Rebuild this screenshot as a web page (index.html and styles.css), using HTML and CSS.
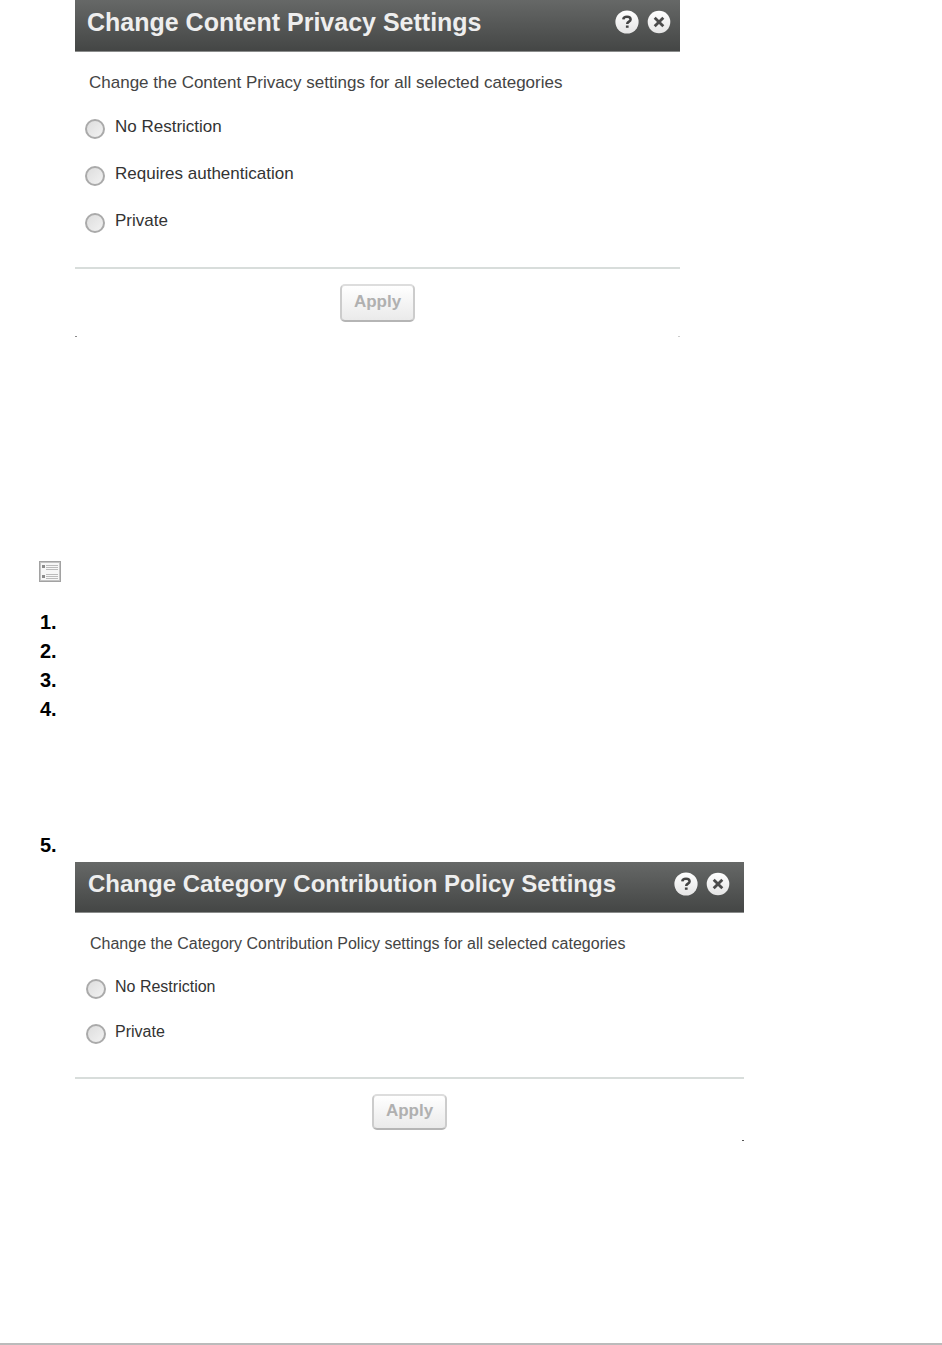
FILE: index.html
```html
<!DOCTYPE html>
<html lang="en">
<head>
<meta charset="utf-8">
<meta name="viewport" content="width=device-width, initial-scale=1">
<title>Category Settings</title>
<link rel="stylesheet" href="styles.css">
</head>
<body>

<!-- shared header icons -->
<svg class="sprite" aria-hidden="true">
  <linearGradient id="shine" x1="0" y1="0" x2="0" y2="1">
    <stop offset="0" stop-color="#fff"/>
    <stop offset="1" stop-color="#e4e4e4"/>
  </linearGradient>
  <symbol id="help" viewBox="0 0 24 24">
    <circle cx="12" cy="12" r="11.6" fill="url(#shine)"/>
    <path d="M8.3 9.4C8.5 7.4 9.900 6.800 12 6.800c2.300 0 3.600 1 3.600 2.600 0 2.200-3.400 2.200-3.400 4.500" fill="none" stroke="#444" stroke-width="2.500"/>
    <path d="M10.900 15.500h2.700v2.300h-2.700z" fill="#444"/>
  </symbol>
  <symbol id="close" viewBox="0 0 24 24">
    <circle cx="12" cy="12" r="11.3" fill="url(#shine)"/>
    <path d="M7.700 7.700l8.600 8.600M16.300 7.700l-8.600 8.600" fill="none" stroke="#4a4a4a" stroke-width="2.800"/>
  </symbol>
</svg>

<main class="page">
  <section class="dialog">
    <header class="dialog-header">
      <h2>Change Content Privacy Settings</h2>
      <button type="button" class="icon-btn" aria-label="Help"><svg><use href="#help"/></svg></button>
      <button type="button" class="icon-btn" aria-label="Close"><svg><use href="#close"/></svg></button>
    </header>
    <form class="dialog-body">
      <p>Change the Content Privacy settings for all selected categories</p>
      <div class="option">
        <input type="radio" name="privacy" id="privacy-none">
        <label for="privacy-none">No Restriction</label>
      </div>
      <div class="option">
        <input type="radio" name="privacy" id="privacy-auth">
        <label for="privacy-auth">Requires authentication</label>
      </div>
      <div class="option">
        <input type="radio" name="privacy" id="privacy-private">
        <label for="privacy-private">Private</label>
      </div>
    </form>
    <footer class="dialog-footer left-dot right-dot">
      <button type="button" class="apply" disabled>Apply</button>
    </footer>
  </section>

  <svg class="task-icon" viewBox="0 0 22 21" aria-hidden="true">
    <rect width="22" height="21" fill="#a2a2a2"/>
    <path d="M1 1h20v19H1z" fill="#c4c4c4"/>
    <path d="M2 2h18v17H2z" fill="#f7f7f7"/>
    <path d="M3 4h3v3H3zM3 14h3v3H3z" fill="#8c8c8c"/>
    <path d="M7 4.500h12M7 6.500h12M7 8.500h12M7 13.500h12M7 15.500h12M7 17.500h12" stroke="#bbb"/>
  </svg>

  <ol class="steps">
    <li><span>1.</span></li>
    <li><span>2.</span></li>
    <li><span>3.</span></li>
    <li class="long"><span>4.</span></li>
    <li><span>5.</span></li>
  </ol>

  <section class="dialog wide">
    <header class="dialog-header">
      <h2>Change Category Contribution Policy Settings</h2>
      <button type="button" class="icon-btn" aria-label="Help"><svg><use href="#help"/></svg></button>
      <button type="button" class="icon-btn" aria-label="Close"><svg><use href="#close"/></svg></button>
    </header>
    <form class="dialog-body">
      <p>Change the Category Contribution Policy settings for all selected categories</p>
      <div class="option">
        <input type="radio" name="policy" id="policy-none">
        <label for="policy-none">No Restriction</label>
      </div>
      <div class="option">
        <input type="radio" name="policy" id="policy-private">
        <label for="policy-private">Private</label>
      </div>
    </form>
    <footer class="dialog-footer right-dot dark">
      <button type="button" class="apply" disabled>Apply</button>
    </footer>
  </section>
</main>

</body>
</html>
```
FILE: styles.css
```css
* {
  box-sizing: border-box;
}

body {
  margin: 0;
  background: #fff;
  color: #333;
  font-family: "Liberation Sans", Arial, Helvetica, sans-serif;
  font-size: 16px;
}

.sprite {
  display: block;
  width: 0;
  height: 0;
}

.page {
  min-height: 100vh;
  padding: 0 39px;
  border-bottom: 2px solid #bbb;
}

/* Dialogs */
.dialog {
  max-width: 605px;
  margin-left: 36px;
  font-size: 17px;
}

.dialog-header {
  display: flex;
  align-items: center;
  gap: 8px;
  min-height: 52px;
  padding: 0 9px 8px 12px;
  background: linear-gradient(#666867, #444645);
  border-bottom: 1px solid #8a8c8b;
}

.dialog-header h2 {
  flex: 1;
  margin: 0;
  color: #eee;
  font-size: 25px;
  line-height: 28px;
}

.icon-btn {
  width: 24px;
  height: 24px;
  padding: 0;
  border: 0;
  background: none;
  cursor: pointer;
}

.icon-btn svg {
  display: block;
  width: 24px;
  height: 24px;
}

.dialog-body {
  padding: 21px 10px 34px;
}

.dialog-body p {
  margin: 0 0 24px 4px;
  color: #444;
  line-height: 20px;
}

.option {
  display: flex;
  align-items: flex-start;
  gap: 10px;
  margin-bottom: 25px;
  line-height: 20px;
}

.option:last-child {
  margin-bottom: 0;
}

/* plain grey radio */
.option input {
  appearance: none;
  width: 20px;
  height: 20px;
  margin: 2px 0 0;
  border: 2px solid #aaa;
  border-radius: 50%;
  background: linear-gradient(135deg, #ddd, #f2f2f2);
}

.option input:checked {
  background: #666;
}

.dialog-footer {
  display: flex;
  justify-content: center;
  position: relative;
  padding: 15px 0;
  border-top: 2px solid #d8dddb;
}

.apply {
  height: 38px;
  padding: 0 12px 2px;
  border: 2px solid #ccc;
  border-top-color: #ddd;
  border-bottom-color: #b5b5b5;
  border-radius: 5px;
  background: linear-gradient(#fff, #eaeaea);
  color: #b0b0b0;
  font-family: inherit;
  font-size: 17px;
  font-weight: bold;
}

/* corner dots at the foot of the dialog */
.left-dot::before,
.right-dot::after {
  content: "";
  position: absolute;
  bottom: 0;
  width: 2px;
  height: 1px;
  background: #888;
}

.left-dot::before {
  left: 0;
}

.right-dot::after {
  right: 0;
  background: #ccc;
}

.right-dot.dark::after {
  background: #555;
}

/* Wider dialog, slightly tighter */
.wide {
  max-width: 669px;
  margin-top: 2px;
  font-size: 16px;
}

.wide .dialog-header {
  min-height: 51px;
  padding: 0 14px 6px 13px;
}

.wide .dialog-header h2 {
  font-size: 24px;
}

.wide .dialog-body {
  padding: 21px 11px 33px;
}

.wide .dialog-body p {
  margin-bottom: 23px;
}

.wide .option {
  gap: 9px;
  margin-bottom: 23px;
}

.wide .option:last-child {
  margin-bottom: 0;
}

.wide .dialog-footer {
  padding-bottom: 11px;
}

.wide .apply {
  height: 36px;
}

/* Steps */
.task-icon {
  display: block;
  width: 22px;
  height: 21px;
  margin-top: 224px;
}

.steps {
  margin: 26px 0 0;
  padding: 0 0 0 1px;
  list-style: none;
  color: #000;
  font-size: 20px;
  font-weight: bold;
  line-height: 29px;
}

.steps .long {
  padding-bottom: 107px;
}
```
